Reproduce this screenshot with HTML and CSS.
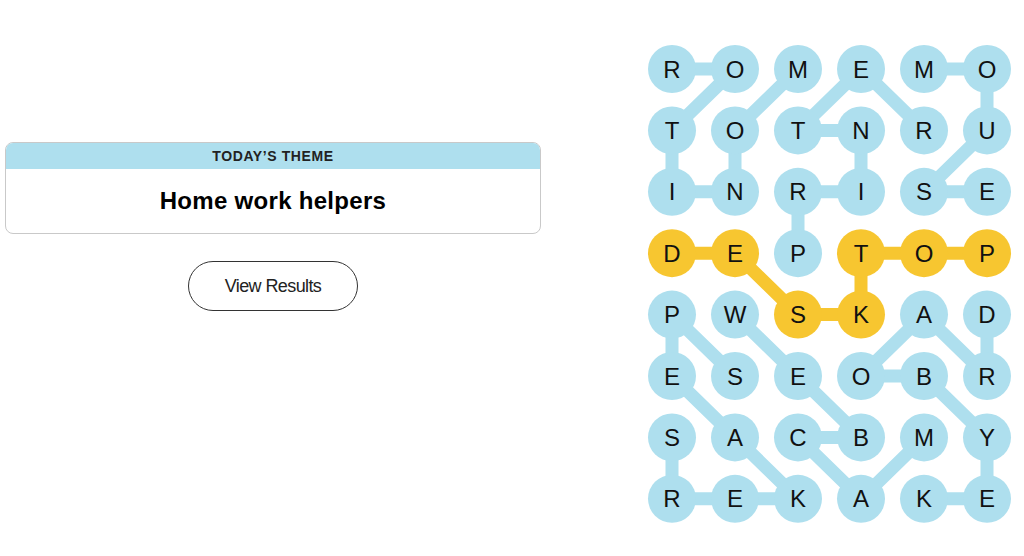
FILE: index.html
```html
<!DOCTYPE html>
<html lang="en">
<head>
    <meta charset="UTF-8">
    <meta name="viewport" content="width=device-width, initial-scale=1.0">
    <title>Strands</title>
    <link rel="stylesheet" href="styles.css">
</head>
<body>
<div class="game">
    <div class="theme-panel">
        <div class="theme-card">
            <div class="theme-label">TODAY’S THEME</div>
            <div class="theme-title">Home work helpers</div>
        </div>
        <button class="results-btn">View Results</button>
    </div>
    <svg id="board" class="board" width="380" height="490" viewBox="0 0 380 490"></svg>
</div>

<script>
    const letters = [
        'ROMEMO',
        'TOTNRU',
        'INRISE',
        'DEPTOP',
        'PWSKAD',
        'ESEOBR',
        'SACBMY',
        'REKAKE'
    ];

    // found words, as [row, col] paths through the grid
    const words = [
        { word: 'MONITOR', cells: [[0,2],[1,1],[2,1],[2,0],[1,0],[0,1],[0,0]] },
        { word: 'PRINTER', cells: [[3,2],[2,2],[2,3],[1,3],[1,2],[0,3],[1,4]] },
        { word: 'MOUSE', cells: [[0,4],[0,5],[1,5],[2,4],[2,5]] },
        { word: 'DESKTOP', cells: [[3,0],[3,1],[4,2],[4,3],[3,3],[3,4],[3,5]], spangram: true },
        { word: 'SPEAKERS', cells: [[5,1],[4,0],[5,0],[6,1],[7,2],[7,1],[7,0],[6,0]] },
        { word: 'WEBCAM', cells: [[4,1],[5,2],[6,3],[6,2],[7,3],[6,4]] },
        { word: 'KEYBOARD', cells: [[7,4],[7,5],[6,5],[5,4],[5,3],[4,4],[5,5],[4,5]] }
    ];

    const board = document.getElementById('board');
    const NS = 'http://www.w3.org/2000/svg';
    const colX = (c) => 32 + c * 63;
    const rowY = (r) => 29 + r * 61.4;

    function el(name, attrs) {
        const node = document.createElementNS(NS, name);
        for (const key in attrs) node.setAttribute(key, attrs[key]);
        board.appendChild(node);
        return node;
    }

    const spanCells = {};

    words.forEach(({ cells, spangram }) => {
        const points = cells.map(([r, c]) => `${colX(c)},${rowY(r)}`).join(' ');
        el('polyline', { points, class: spangram ? 'link span' : 'link' });
        if (spangram) cells.forEach(([r, c]) => spanCells[`${r}-${c}`] = true);
    });

    letters.forEach((row, r) => {
        [...row].forEach((ch, c) => {
            const found = spanCells[`${r}-${c}`];
            el('circle', { cx: colX(c), cy: rowY(r), r: 24, class: found ? 'cell span' : 'cell' });
            const text = el('text', { x: colX(c), y: rowY(r) + 8.5, class: 'letter' });
            text.textContent = ch;
        });
    });
</script>
</body>
</html>
```

FILE: styles.css
```css
body {
    margin: 0;
    background-color: #fff;
    font-family: "Liberation Sans", Arial, sans-serif;
    color: #000;
}

.game {
    display: flex;
    align-items: flex-start;
    padding-left: 5px;
}

.theme-panel {
    width: 536px;
    padding-top: 142px;
    display: flex;
    flex-direction: column;
    align-items: center;
}

.theme-card {
    width: 100%;
    box-sizing: border-box;
    border: 1px solid #c9c9c9;
    border-radius: 8px;
    overflow: hidden;
}

.theme-label {
    height: 26px;
    line-height: 27px;
    background-color: #aedfee;
    text-align: center;
    font-size: 14px;
    font-weight: bold;
    letter-spacing: 0.6px;
    color: #222;
}

.theme-title {
    height: 64px;
    line-height: 64px;
    text-align: center;
    font-size: 24px;
    font-weight: bold;
    letter-spacing: 0.3px;
}

.results-btn {
    margin-top: 27px;
    width: 170px;
    height: 50px;
    border: 1px solid #333;
    border-radius: 25px;
    background-color: #fff;
    font-family: "Liberation Sans", Arial, sans-serif;
    font-size: 18px;
    letter-spacing: -0.6px;
    color: #222;
    cursor: pointer;
}

.board {
    margin-left: 99px;
    margin-top: 40px;
}

.link {
    fill: none;
    stroke: #aedfee;
    stroke-width: 13;
    stroke-linecap: round;
    stroke-linejoin: round;
}

.link.span {
    stroke: #f7c630;
}

.cell {
    fill: #aedfee;
}

.cell.span {
    fill: #f7c630;
}

.letter {
    font-family: "Liberation Sans", Arial, sans-serif;
    font-size: 24px;
    text-anchor: middle;
    fill: #111;
}
```
